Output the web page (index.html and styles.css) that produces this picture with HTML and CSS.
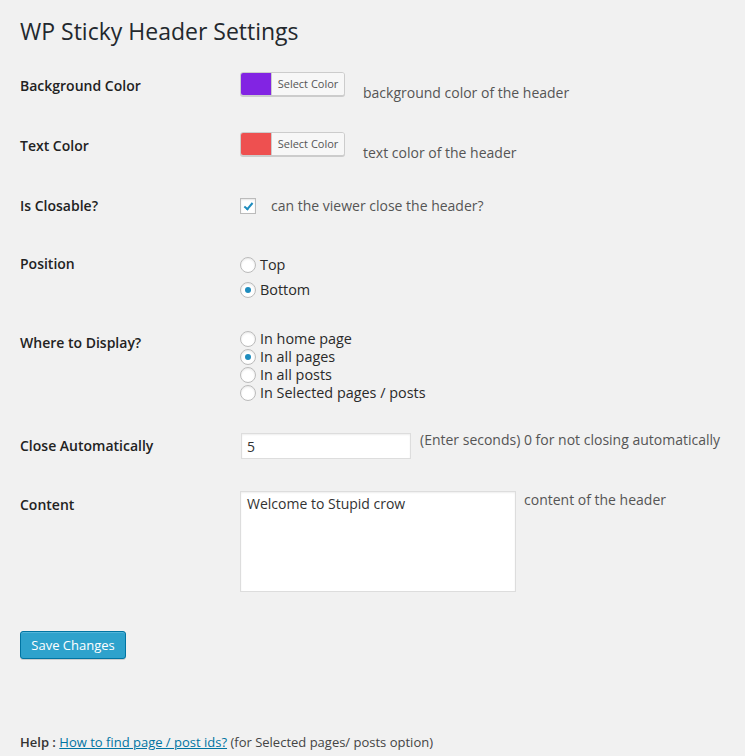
FILE: index.html
```html
<!DOCTYPE html>
<html>
<head>
<meta charset="utf-8">
<link rel="stylesheet" href="styles.css">
</head>
<body>
<div class="wrap">
  <h2 class="title">WP Sticky Header Settings</h2>
  <form class="settings">
    <div class="row row-bg">
      <div class="label lp4">Background Color</div>
      <div class="field">
        <button type="button" class="picker"><span class="swatch swatch-purple"></span><span class="picker-text">Select Color</span></button>
        <span class="desc desc-picker">background color of the header</span>
      </div>
    </div>
    <div class="row row-text">
      <div class="label lp4">Text Color</div>
      <div class="field">
        <button type="button" class="picker"><span class="swatch swatch-red"></span><span class="picker-text">Select Color</span></button>
        <span class="desc desc-picker">text color of the header</span>
      </div>
    </div>
    <div class="row row-close">
      <div class="label">Is Closable?</div>
      <div class="field">
        <input type="checkbox" class="check" checked>
        <span class="desc desc-check">can the viewer close the header?</span>
      </div>
    </div>
    <div class="row row-pos">
      <div class="label">Position</div>
      <div class="field options options-pos">
        <label class="opt"><input type="radio" name="pos" class="radio">Top</label>
        <label class="opt"><input type="radio" name="pos" class="radio" checked>Bottom</label>
      </div>
    </div>
    <div class="row row-where">
      <div class="label lp4">Where to Display?</div>
      <div class="field options options-where">
        <label class="opt"><input type="radio" name="where" class="radio">In home page</label>
        <label class="opt"><input type="radio" name="where" class="radio" checked>In all pages</label>
        <label class="opt"><input type="radio" name="where" class="radio">In all posts</label>
        <label class="opt"><input type="radio" name="where" class="radio">In Selected pages / posts</label>
      </div>
    </div>
    <div class="row row-auto">
      <div class="label lp6">Close Automatically</div>
      <div class="field">
        <input type="text" class="text-input" value="5">
        <span class="desc desc-input">(Enter seconds) 0 for not closing automatically</span>
      </div>
    </div>
    <div class="row row-content">
      <div class="label lp6">Content</div>
      <div class="field">
        <textarea class="content-area">Welcome to Stupid crow</textarea>
        <span class="desc desc-area">content of the header</span>
      </div>
    </div>
    <div class="submit">
      <button type="button" class="btn-primary">Save Changes</button>
    </div>
  </form>
  <p class="help"><strong>Help :</strong> <a href="#">How to find page / post ids?</a> (for Selected pages/ posts option)</p>
</div>
</body>
</html>
```

FILE: styles.css
```css
html, body {
  margin: 0;
  padding: 0;
  background: #f1f1f1;
}
body {
  font-family: "Open Sans", "Liberation Sans", sans-serif;
  font-size: 14px;
  color: #444;
  height: 756px;
  overflow: hidden;
}
.wrap {
  padding: 0 20px;
}
.title {
  margin: 0;
  padding-top: 17px;
  font-size: 23px;
  font-weight: 400;
  line-height: 29px;
  color: #23282d;
}
.settings {
  margin-top: 26px;
}
.row {
  display: flex;
  align-items: flex-start;
}
.label {
  width: 220px;
  flex: none;
  font-weight: 600;
  line-height: 20px;
  color: #222;
}
.lp3 { padding-top: 3px; }
.lp4 { padding-top: 4px; }
.lp5 { padding-top: 5px; }
.lp6 { padding-top: 6px; }
.field {
  display: flex;
  align-items: flex-start;
}
.row-bg { height: 60px; }
.row-text { height: 64px; }
.row-close { height: 58px; }
.row-pos { height: 75px; }
.row-where { height: 101px; }
.row-auto { height: 59px; }
.row-content { height: 102px; }

.desc {
  line-height: 20px;
  color: #555;
}
.desc-picker { margin: 11px 0 0 18px; }
.desc-check { margin-left: 15px; }
.desc-input { margin: 0 0 0 9px; }
.desc-area { margin: 1px 0 0 8px; }

.picker {
  display: flex;
  padding: 0;
  margin: 0;
  height: 24px;
  width: 105px;
  border: 1px solid #ccc;
  border-radius: 3px;
  background: #f7f7f7;
  box-shadow: 0 1px 0 #ccc;
  overflow: hidden;
  cursor: pointer;
  font-family: inherit;
}
.swatch {
  width: 30px;
  height: 100%;
  flex: none;
}
.swatch-purple { background: #8224e3; }
.swatch-red { background: #ee5050; }
.picker-text {
  flex: 1;
  height: 100%;
  border-left: 1px solid #ccc;
  background: #f7f7f7;
  color: #555;
  font-size: 11px;
  line-height: 22px;
  text-align: center;
}

.check {
  -webkit-appearance: none;
  appearance: none;
  margin: 2px 0 0 0;
  width: 16px;
  height: 16px;
  border: 1px solid #bbb;
  background: #fff;
  box-shadow: inset 0 1px 2px rgba(0,0,0,0.1);
  position: relative;
  flex: none;
}
.check:checked::before {
  content: "";
  position: absolute;
  left: 5px;
  top: 2px;
  width: 3px;
  height: 7px;
  border-right: 2px solid #1e8cbe;
  border-bottom: 2px solid #1e8cbe;
  transform: rotate(40deg);
}

.options {
  flex-direction: column;
}
.options-pos {
  padding-top: 1px;
  gap: 5px;
}
.options-where {
  padding-top: 1px;
}
.opt {
  display: flex;
  align-items: center;
  line-height: 20px;
  font-size: 14.4px;
  color: #2a2a2a;
}
.options-where .opt {
  line-height: 18px;
}
.radio {
  -webkit-appearance: none;
  appearance: none;
  margin: 0 4px 0 0;
  width: 16px;
  height: 16px;
  border: 1px solid #bbb;
  border-radius: 50%;
  background: #fff;
  box-shadow: inset 0 1px 2px rgba(0,0,0,0.1);
  position: relative;
  flex: none;
}
.radio:checked::before {
  content: "";
  position: absolute;
  left: 4px;
  top: 4px;
  width: 6px;
  height: 6px;
  border-radius: 50%;
  background: #1e8cbe;
}

.text-input {
  margin: 3px 0 0 1px;
  width: 170px;
  height: 26px;
  box-sizing: border-box;
  border: 1px solid #ddd;
  background: #fff;
  box-shadow: inset 0 1px 2px rgba(0,0,0,0.07);
  padding: 0 5px;
  font-family: inherit;
  font-size: 14px;
  color: #333;
  outline: none;
}
.content-area {
  margin: 2px 0 0 0;
  width: 276px;
  height: 101px;
  box-sizing: border-box;
  border: 1px solid #ddd;
  background: #fff;
  box-shadow: inset 0 1px 2px rgba(0,0,0,0.07);
  padding: 2px 6px;
  font-family: inherit;
  font-size: 14px;
  line-height: 20px;
  color: #333;
  resize: none;
  outline: none;
}

.submit {
  margin-top: 40px;
}
.btn-primary {
  height: 28px;
  width: 106px;
  padding: 0;
  margin: 0;
  border: 1px solid #0074a2;
  border-radius: 3px;
  background: #2ea2cc;
  box-shadow: inset 0 1px 0 rgba(120,200,230,0.5), 0 1px 0 rgba(0,0,0,0.15);
  color: #fff;
  font-family: inherit;
  font-size: 13px;
  line-height: 26px;
  cursor: pointer;
}
.help {
  margin: 0;
  padding-top: 73px;
  font-size: 13px;
  line-height: 20px;
  color: #444;
}
.help strong {
  font-weight: 600;
  color: #333;
}
.help a {
  color: #0074a2;
  text-decoration: underline;
}
```
